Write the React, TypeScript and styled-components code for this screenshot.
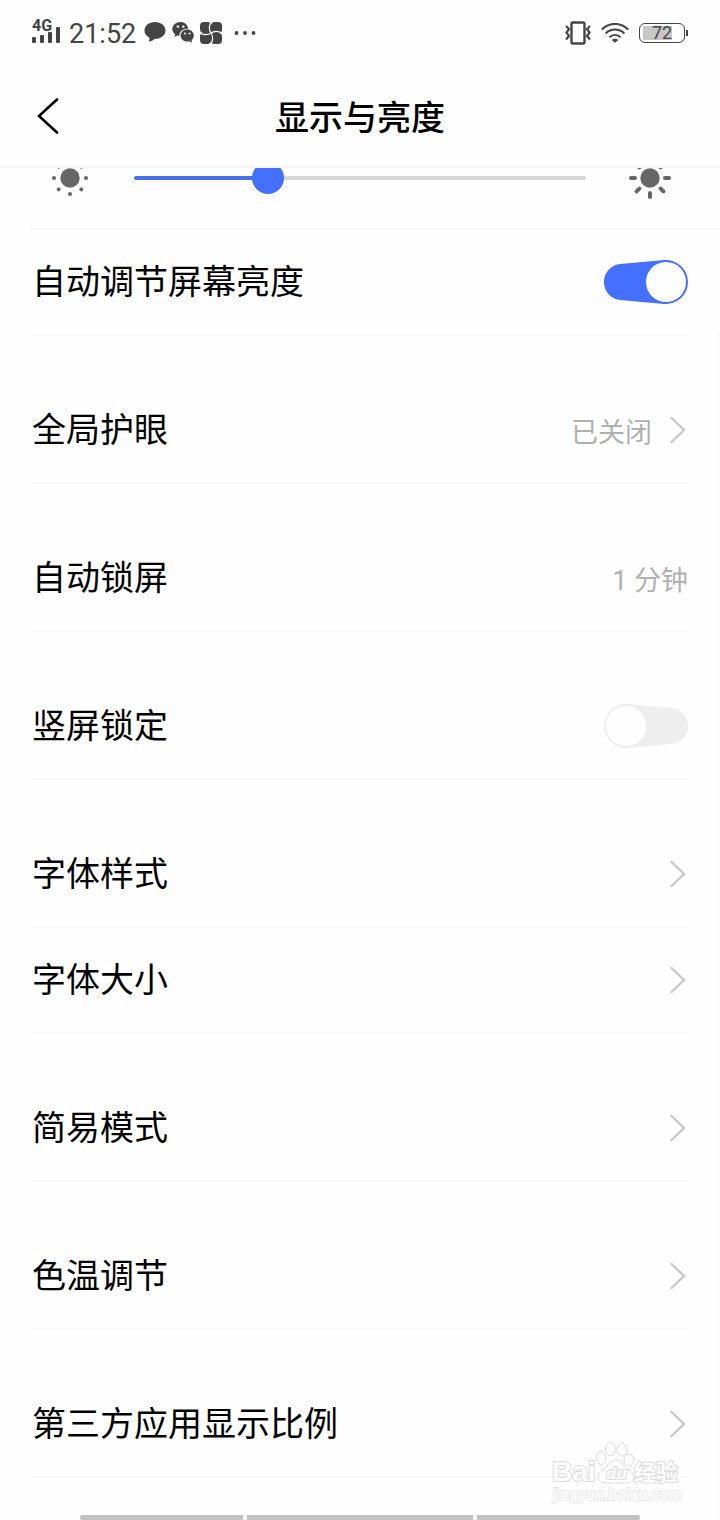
import React, { useState } from 'react';
import styled, { createGlobalStyle } from 'styled-components';

const GlobalStyle = createGlobalStyle`
  *, *::before, *::after { box-sizing: border-box; }
  body {
    margin: 0;
    background: #fefefe;
    color: #000;
    font-family: Roboto, "Noto Sans CJK SC", sans-serif;
  }
  button, input { font: inherit; color: inherit; }
`;

const Screen = styled.div`
  position: relative;
  display: flex;
  flex-direction: column;
  min-height: 100vh;
  overflow: hidden;
`;

const StatusBar = styled.div`
  display: flex;
  justify-content: space-between;
  align-items: center;
  height: 66px;
  padding: 0 32px;
  color: #444;
`;

const StatusGroup = styled.div<{ $gap: number }>`
  display: flex;
  align-items: center;
  gap: ${(p) => p.$gap}px;
`;

const Clock = styled.time`
  padding: 2px 2px 0;
  font-size: 27px;
  line-height: 32px;
`;

const Battery = styled.div`
  position: relative;
  display: flex;
  align-items: center;
  justify-content: center;
  width: 46px;
  height: 20px;
  margin-right: 3px;
  border: 1px solid #444;
  border-radius: 6px;
  background: linear-gradient(#c6c6c6, #c6c6c6) 3px 2px / 29px 14px no-repeat;
  font-size: 18px;
  line-height: 18px;

  &::after {
    content: "";
    position: absolute;
    right: -4px;
    top: 6px;
    width: 2px;
    height: 6px;
    background: #444;
  }
`;

const Header = styled.header`
  display: grid;
  grid-template-columns: 64px 1fr 64px;
  align-items: center;
  height: 102px;
  padding: 0 16px;
  border-bottom: 2px solid #f5f5f5;
`;

const BackButton = styled.button`
  display: flex;
  align-items: center;
  justify-content: center;
  width: 64px;
  height: 64px;
  padding: 0;
  border: 0;
  background: none;
`;

const Title = styled.h1`
  margin: 0;
  padding-top: 4px;
  text-align: center;
  font-size: 34px;
  font-weight: 500;
  line-height: 48px;
`;

const BrightnessClip = styled.div`
  display: flex;
  align-items: flex-end;
  height: 60px;
  overflow: hidden;
`;

const BrightnessRow = styled.div`
  display: flex;
  flex: 1;
  align-items: center;
  gap: 42px;
  height: 100px;
  padding: 0 48px;
`;

const Slider = styled.input<{ $value: number }>`
  flex: 1;
  min-width: 0;
  height: 32px;
  margin: 0;
  appearance: none;
  background: none;

  &::-webkit-slider-runnable-track {
    height: 4px;
    border-radius: 2px;
    background: linear-gradient(to right, #4a70e8 ${(p) => p.$value}%, #d6d6d6 ${(p) => p.$value}%);
  }

  &::-webkit-slider-thumb {
    appearance: none;
    width: 32px;
    height: 32px;
    margin-top: -14px;
    border-radius: 50%;
    background: #456fff;
  }
`;

const Divider = styled.hr`
  width: 100%;
  height: 2px;
  margin: 0;
  border: 0;
  background: linear-gradient(#f7f7f7, #f7f7f7) 30px 0 no-repeat;
`;

const Settings = styled.main`
  display: flex;
  flex: 1;
  flex-direction: column;
  gap: 42px;
  padding: 0 32px;
`;

const Group = styled.section`
  display: flex;
  flex-direction: column;
`;

const rowBox = `
  display: flex;
  align-items: center;
  justify-content: space-between;
  width: 100%;
  height: 106px;
  padding: 0;
  border: 0;
  border-bottom: 2px solid #f7f7f7;
  background: none;
  text-align: left;
`;

const RowButton = styled.button`
  ${rowBox}
`;

const RowLabel = styled.label`
  ${rowBox}
  position: relative;
`;

const RowTitle = styled.span`
  font-size: 34px;
  line-height: 48px;
`;

const RowEnd = styled.span`
  display: flex;
  align-items: center;
  gap: 16px;
`;

const RowValue = styled.span`
  padding-top: 6px;
  color: #b0b0b0;
  font-size: 27px;
  line-height: 40px;
`;

const HiddenCheck = styled.input`
  position: absolute;
  right: 0;
  width: 84px;
  height: 44px;
  margin: 0;
  opacity: 0;
`;

const NavBar = styled.div`
  display: flex;
  gap: 4px;
  height: 5px;
  margin: 0 80px;
`;

const NavPill = styled.span<{ $grow: number }>`
  flex: ${(p) => p.$grow} 1 0;
  background: #c1c1c1;

  &:first-child { border-radius: 3px 0 0 3px; }
  &:last-child { border-radius: 0 3px 3px 0; }
`;

const ScrollTrack = styled.div`
  position: absolute;
  top: 332px;
  right: 0;
  bottom: 0;
  width: 4px;
  background: #fbfbfb;
`;

const Watermark = styled.svg`
  position: absolute;
  right: 34px;
  bottom: 14px;
  pointer-events: none;

  text { paint-order: stroke; }
`;

const SignalIcon = () => (
  <svg width="29" height="36" viewBox="0 0 29 36" fill="#444">
    <text x="0" y="16" fontSize="16" fontWeight="700" fontFamily="Roboto, sans-serif">4G</text>
    <rect x="0" y="22" width="4" height="6" rx="1" />
    <rect x="8" y="20" width="4" height="8" rx="1" />
    <rect x="16" y="17" width="4" height="11" rx="1" />
    <rect x="24" y="12" width="4" height="16" rx="1" />
  </svg>
);

const ChatIcon = () => (
  <svg width="22" height="22" viewBox="0 0 22 22" fill="#444">
    <path d="M11 0C5 0 .5 3.700 .5 8.500c0 3 1.800 5.600 4.800 7.100.3 1.400 0 2.700-.5 3.900 2.400-.3 4.200-1.200 5.500-2.600h.7c6 0 10.500-3.700 10.500-8.400S17 0 11 0Z" />
  </svg>
);

const WechatIcon = () => (
  <svg width="22" height="22" viewBox="0 0 22 22" fill="#444">
    <path d="M8.500 0C4 0 .3 3 .3 7c0 2.200 1.100 4 2.900 5.300l-.7 2.700 2.900-1.500c.8.2 1.300.3 2 .3C7.300 9.500 11 6.600 16.400 6.500 15.500 2.700 12.400 0 8.500 0Z" />
    <path d="M15.200 7.500C11.500 7.500 8.600 10.200 8.600 13.500s2.900 6 6.600 6c.7 0 1.400-.1 2.100-.3l2.800 1.600-.6-2.600c1.400-1.100 2.300-2.800 2.300-4.700 0-3.300-2.900-6-6.600-6Z" />
    <g fill="#fefefe">
      <circle cx="5.900" cy="4.600" r="1.200" />
      <circle cx="11.300" cy="4.600" r="1.200" />
      <circle cx="13" cy="11.500" r="1" />
      <circle cx="17.500" cy="11.500" r="1" />
    </g>
  </svg>
);

const PinwheelIcon = () => (
  <svg width="22" height="22" viewBox="0 0 22 22">
    <g fill="#444">
      <rect x="0" y="0" width="11.500" height="11" rx="4" />
      <rect x="11" y="0" width="11" height="11.500" rx="4" />
      <rect x="10.500" y="11" width="11.500" height="11" rx="4" />
      <rect x="0" y="10.500" width="11" height="11.500" rx="4" />
      <rect x="4" y="4" width="14" height="14" />
    </g>
    <g fill="none" stroke="#fefefe" strokeWidth="1.200">
      {[0, 90, 180, 270].map((a) => (
        <path key={a} transform={`rotate(${a} 11 11)`} d="M11 11C9 8 8.800 4 11 0" />
      ))}
    </g>
  </svg>
);

const MoreIcon = () => (
  <svg width="30" height="22" viewBox="0 0 30 22" fill="#444">
    <circle cx="8.500" cy="11" r="1.900" />
    <circle cx="17" cy="11" r="1.900" />
    <circle cx="25.500" cy="11" r="1.900" />
  </svg>
);

const VibrateIcon = () => (
  <svg width="26" height="24" viewBox="0 0 26 24" fill="none" stroke="#444">
    <rect x="6.500" y="1.500" width="13" height="21" rx="1.500" strokeWidth="2.400" />
    <path d="M1 5 4 8 1.500 11.500 4 15 1 18.500M25 5l-3 3 2.500 3.500L22 15l3 3.500" strokeWidth="2.200" />
  </svg>
);

const WifiIcon = () => (
  <svg width="28" height="20" viewBox="0 0 28 20" fill="none" stroke="#444" strokeWidth="2">
    <path d="M.8 6.500C8.500-1 19.500-1 27.200 6.500" />
    <path d="M4.600 10.500c5.500-5.200 13.300-5.200 18.800 0" />
    <path d="M8.400 14.200c3.300-3 7.900-3 11.200 0" />
    <path d="M14 19.800 10.700 17c2-1.600 4.600-1.600 6.600 0Z" fill="#444" stroke="none" />
  </svg>
);

const SunIcon = ({ bright = false }: { bright?: boolean }) => (
  <svg width="44" height="44" viewBox="0 0 44 44" fill="#666">
    <circle cx="22" cy="22" r="9.700" />
    {[0, 45, 90, 135, 180, 225, 270, 315].map((a) => (
      <g key={a} transform={`rotate(${a} 22 22)`}>
        {bright ? (
          <rect x="35" y="20" width="8" height="4" rx="2" />
        ) : (
          <circle cx="38" cy="22" r="2" />
        )}
      </g>
    ))}
  </svg>
);

const Chevron = () => (
  <svg width="20" height="28" viewBox="0 0 20 28" fill="none" stroke="#c8c8c8" strokeWidth="2.400">
    <path d="M3.500 2 16 14 3.500 26" strokeLinecap="round" />
  </svg>
);

const ToggleArt = ({ on }: { on: boolean }) => (
  <svg width="84" height="44" viewBox="0 0 84 44">
    <g transform={on ? undefined : 'matrix(-1 0 0 1 84 0)'}>
      <path
        d="M16.360 4.070 60 .09A22 22 0 1 1 60 43.910L16.360 39.930A18 18 0 0 1 16.360 4.070Z"
        fill={on ? '#456fff' : '#eee'}
      />
      <circle cx="62" cy="22" r="20" fill="#fefefe" />
    </g>
  </svg>
);

const LinkRow = ({ title, value }: { title: string; value?: string }) => (
  <RowButton type="button">
    <RowTitle>{title}</RowTitle>
    <RowEnd>
      {value && <RowValue>{value}</RowValue>}
      <Chevron />
    </RowEnd>
  </RowButton>
);

const ToggleRow = ({ title, initial }: { title: string; initial: boolean }) => {
  const [on, setOn] = useState(initial);
  return (
    <RowLabel>
      <RowTitle>{title}</RowTitle>
      <HiddenCheck type="checkbox" checked={on} onChange={(e) => setOn(e.target.checked)} />
      <ToggleArt on={on} />
    </RowLabel>
  );
};

const BaiduWatermark = () => (
  <Watermark width="136" height="66" viewBox="0 0 136 66" fill="#fefefe" stroke="#dcdcdc" strokeWidth="2">
    <g fontFamily='"Liberation Sans", "Noto Sans CJK SC", sans-serif' fontWeight="700">
      <text x="2" y="41" fontSize="28">Bai</text>
      <g strokeWidth="1">
        <ellipse cx="51" cy="18" rx="5" ry="6.500" />
        <ellipse cx="60.500" cy="9" rx="5" ry="6.500" />
        <ellipse cx="72" cy="9.500" rx="5" ry="6.500" />
        <ellipse cx="79" cy="20" rx="5" ry="6" />
        <path d="M66 20c-6 0-7 5-12 9-6 4-7 8-5 11 3 4 11 3 17 3s14 1 17-3c2-3 1-7-5-11-5-4-6-9-12-9Z" />
      </g>
      <text x="56" y="39" fontSize="17" fontStyle="italic">du</text>
      <text x="84" y="40" fontSize="22">经验</text>
    </g>
    <text x="3" y="60" fontSize="16" fontFamily='"Liberation Sans", sans-serif' stroke="#ebebeb">
      jingyan.baidu.com
    </text>
  </Watermark>
);

export default function App() {
  const [level, setLevel] = useState(28);
  return (
    <Screen>
      <GlobalStyle />
      <StatusBar>
        <StatusGroup $gap={6}>
          <SignalIcon />
          <Clock>21:52</Clock>
          <ChatIcon />
          <WechatIcon />
          <PinwheelIcon />
          <MoreIcon />
        </StatusGroup>
        <StatusGroup $gap={10}>
          <VibrateIcon />
          <WifiIcon />
          <Battery>72</Battery>
        </StatusGroup>
      </StatusBar>

      <Header>
        <BackButton type="button" aria-label="返回">
          <svg width="24" height="38" viewBox="0 0 24 38" fill="none" stroke="#000" strokeWidth="2.600">
            <path d="M21 2.500 3 19 21 35.500" strokeLinecap="round" />
          </svg>
        </BackButton>
        <Title>显示与亮度</Title>
      </Header>

      <BrightnessClip>
        <BrightnessRow>
          <SunIcon />
          <Slider
            type="range"
            min={0}
            max={100}
            aria-label="亮度"
            value={level}
            $value={level}
            onChange={(e) => setLevel(Number(e.target.value))}
          />
          <SunIcon bright />
        </BrightnessRow>
      </BrightnessClip>
      <Divider />

      <Settings>
        <Group>
          <ToggleRow title="自动调节屏幕亮度" initial />
        </Group>
        <Group>
          <LinkRow title="全局护眼" value="已关闭" />
        </Group>
        <Group>
          <RowButton type="button">
            <RowTitle>自动锁屏</RowTitle>
            <RowValue>1 分钟</RowValue>
          </RowButton>
        </Group>
        <Group>
          <ToggleRow title="竖屏锁定" initial={false} />
        </Group>
        <Group>
          <LinkRow title="字体样式" />
          <LinkRow title="字体大小" />
        </Group>
        <Group>
          <LinkRow title="简易模式" />
        </Group>
        <Group>
          <LinkRow title="色温调节" />
        </Group>
        <Group>
          <LinkRow title="第三方应用显示比例" />
        </Group>
      </Settings>

      <NavBar>
        <NavPill $grow={163} />
        <NavPill $grow={226} />
        <NavPill $grow={163} />
      </NavBar>
      <ScrollTrack />
      <BaiduWatermark />
    </Screen>
  );
}
